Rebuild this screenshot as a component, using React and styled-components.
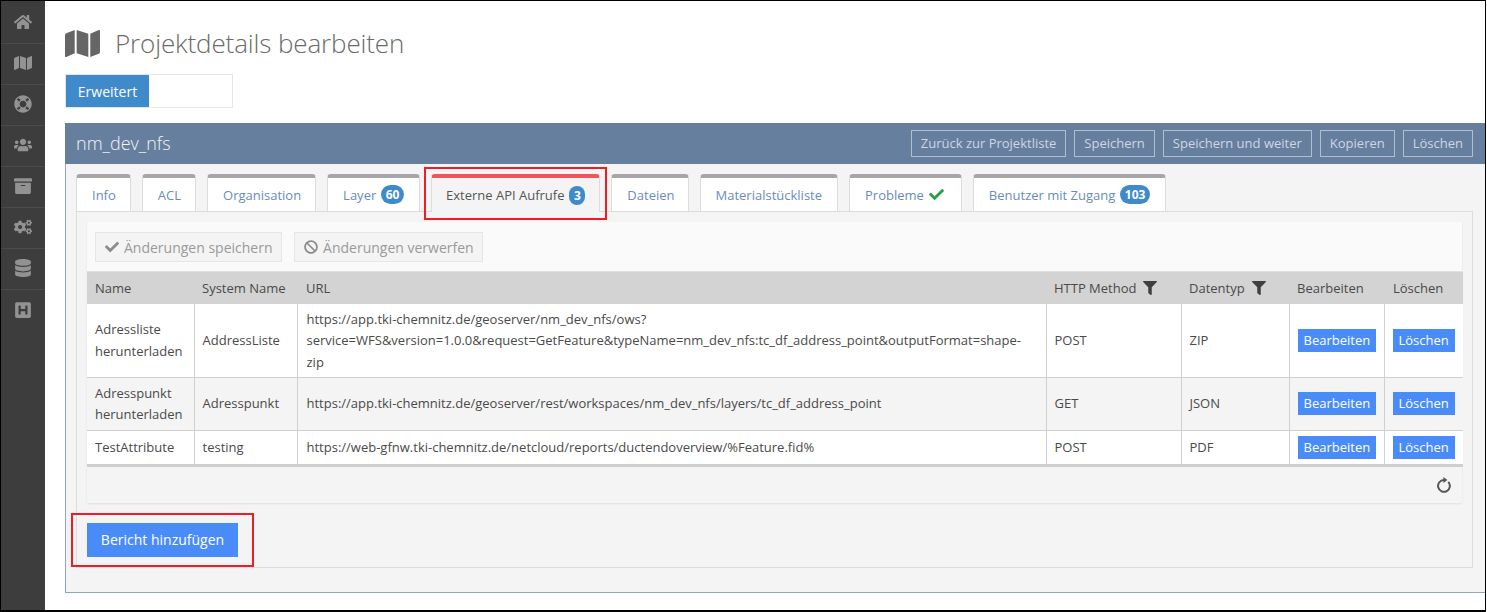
import React from "react";
import styled, { createGlobalStyle } from "styled-components";
import { FaHome, FaMap, FaLifeRing, FaUsers, FaArchive, FaCogs, FaDatabase, FaHSquare, FaCheck, FaBan, FaFilter } from "react-icons/fa";

const Global = createGlobalStyle`
  html, body { margin: 0; padding: 0; background: #fff; }
  body { font-family: "Open Sans", "Liberation Sans", sans-serif; font-size: 13px; color: #444; }
  * { box-sizing: border-box; }
`;
const Frame = styled.div`
  position: relative; width: 1486px; height: 612px; display: flex; overflow: hidden;
  border: 1px solid #000; border-width: 1px 1px 2px 1px; background: #fff;
`;
const Sidebar = styled.nav`
  width: 44px; flex: none; background: #3d3d3d; display: flex; flex-direction: column; padding-top: 2px;
`;
const SideItem = styled.div`
  height: 41px; display: flex; align-items: center; justify-content: center; color: #929292; font-size: 18px;
  border-bottom: 1px solid #4a4a4a; padding-bottom: 2px;
  &:last-child { border-bottom: 0; }
`;
const Main = styled.main`
  flex: 1; min-width: 0; padding: 0 0 0 20px; display: flex; flex-direction: column;
`;
const Title = styled.h1`
  margin: 0; height: 73px; padding-top: 17px; padding-bottom: 6px; display: flex; align-items: center; gap: 15px;
  font-weight: 300; font-size: 26px; letter-spacing: -0.13px; color: #6b6b6b; line-height: 42px;
  svg { color: #666; font-size: 35px; }
`;
const ModeBar = styled.div`
  width: 168px; height: 34px; border: 1px solid #e6e6e6; padding: 0; display: flex;
`;
const ModeTab = styled.div`
  width: 83px; background: #3f8acb; color: #fff; font-weight: 500; font-size: 14px;
  display: flex; align-items: center; justify-content: center;
`;
const Panel = styled.section`
  margin-top: 15px; height: 470px; background: #f4f4f4; border: 1px solid #95a3b8; border-top: 0; border-right: 0;
  display: flex; flex-direction: column;
`;
const PanelHead = styled.header`
  height: 41px; background: #667f9f; display: flex; align-items: center; justify-content: space-between;
  padding: 0 12px 1px 11px; color: #fff; margin-left: -1px;
`;
const PanelName = styled.div` font-size: 18px; font-weight: 300; color: #f2f2f2; `;
const HeadButtons = styled.div` display: flex; gap: 8px; `;
const HeadButton = styled.button`
  height: 27px; padding: 0 9px; background: transparent; border: 1px solid #b3bfcf; color: #ced6e1;
  font: 13px "Open Sans", sans-serif;
`;
const Body = styled.div` padding: 10px 12px 0 10px; position: relative; `;
const Tabs = styled.div` display: flex; gap: 11px; height: 38px; position: relative; z-index: 1; `;
const Tab = styled.div`
  height: ${p => (p.$active ? "38px" : "37px")};
  border: 1px solid #dcdcdc; border-top: 4px solid ${p => (p.$active ? "#f2545b" : "#a6a6a6")};
  border-bottom: 0; border-radius: 4px 4px 0 0;
  background: ${p => (p.$active ? "#f4f4f4" : "#fff")};
  color: ${p => (p.$active ? "#555" : "#6a8cba")};
  padding: 0 ${p => p.$pr || 14}px 0 ${p => p.$pl || 15}px;
  display: flex; align-items: center; gap: 5px; font-size: 13px; white-space: nowrap;
  svg { color: #2e9e44; font-size: 15px; }
`;
const Badge = styled.span`
  background: #3f8acb; color: #fff; font-weight: 700; font-size: 12px; border-radius: 10px; height: 19px; min-width: 15px;
  padding: 0 4.5px; display: inline-flex; align-items: center; justify-content: center;
`;
const TabPane = styled.div`
  height: 357px; margin-top: -1px; border: 1px solid #dcdcdc; padding: 10px 10px 0 10px; display: flex; flex-direction: column;
`;
const Grid = styled.div`
  background: #f4f4f4; box-shadow: 0 1px 2px rgba(0,0,0,.08);
`;
const Toolbar = styled.div`
  height: 50px; background: #fafafa; padding: 10px 8px; display: flex; gap: 12px; border-bottom: 1px solid #e0e0e0;
`;
const ToolButton = styled.button`
  height: 30px; padding: 0 8.5px 0 9px; background: #f4f4f4; border: 1px solid #e6e6e6; color: #9a9a9a;
  display: inline-flex; align-items: center; gap: 5px; font: 14px "Open Sans", sans-serif;
  svg { color: #8c8c8c; font-size: 14px; }
`;
const Table = styled.table`
  width: 1376px; table-layout: fixed; border-collapse: collapse; font-size: 13px; color: #4a4a4a;
  border-bottom: 3px solid #cfcfcf;
  tbody tr + tr td { border-top: 1px solid #d0d0d0; }
`;
const Th = styled.th`
  height: 32px; background: #d3d3d3; font-weight: 400; text-align: left; padding: 0 8px 0 ${p => p.$pl || 8}px; color: #4a4a4a; white-space: nowrap;
  svg { font-size: 14px; color: #3f3f3f; margin-left: 7px; vertical-align: -2px; }
`;
const Row = styled.tr`
  background: ${p => (p.$alt ? "#f4f4f4" : "#fff")};
  height: ${p => p.$h}px;
`;
const Td = styled.td`
  padding: 1px 8px 0; line-height: 21.5px; border-left: 1px solid #d0d0d0; word-break: break-word;
  &:first-child { border-left: 0; }
`;
const UrlCell = styled(Td)` padding-left: 9px; padding-right: 19px; `;
const ActionCell = styled(Td)` padding-top: 0; white-space: nowrap; line-height: 0; `;
const Action = styled.button`
  height: 23px; padding: 0 6px; background: #4a8cf7; border: 0; color: #fff; font: 13px/23px "Open Sans", sans-serif; vertical-align: middle;
`;
const GridFoot = styled.div`
  height: 36px; display: flex; align-items: center; justify-content: flex-end; padding-right: 10px; color: #555;
`;
const AddButton = styled.button`
  margin: 20px 0 0 0; width: 151px; height: 34px; background: #4a8cf7; border: 0; color: #fff; font: 14px "Open Sans", sans-serif;
  align-self: flex-start;
`;
const Mark = styled.div`
  position: absolute; border: 2px solid #ee1c25; pointer-events: none; z-index: 5;
  left: ${p => p.$x}px; top: ${p => p.$y}px; width: ${p => p.$w}px; height: ${p => p.$h}px;
`;

const ReloadIcon = () => (
  <svg width="16" height="16" viewBox="0 0 16 16" aria-hidden="true">
    <path d="M12.3 4.9 A5.9 5.9 0 1 1 8 3" fill="none" stroke="currentColor" strokeWidth="2" />
    <path d="M7.4 0 L11.4 3 L7.4 6 Z" fill="currentColor" />
  </svg>
);

const sideIcons = [FaHome, FaMap, FaLifeRing, FaUsers, FaArchive, FaCogs, FaDatabase, FaHSquare];
const headButtons = ["Zurück zur Projektliste", "Speichern", "Speichern und weiter", "Kopieren", "Löschen"];
const rows = [
  { h: 73, name: "Adressliste herunterladen", sys: "AddressListe", url: "https://app.tki-chemnitz.de/geoserver/nm_dev_nfs/ows?service=WFS&version=1.0.0&request=GetFeature&typeName=nm_dev_nfs:tc_df_address_point&outputFormat=shape-zip", m: "POST", t: "ZIP" },
  { h: 53, alt: true, name: "Adresspunkt herunterladen", sys: "Adresspunkt", url: "https://app.tki-chemnitz.de/geoserver/rest/workspaces/nm_dev_nfs/layers/tc_df_address_point", m: "GET", t: "JSON" },
  { h: 35, name: "TestAttribute", sys: "testing", url: "https://web-gfnw.tki-chemnitz.de/netcloud/reports/ductendoverview/%Feature.fid%", m: "POST", t: "PDF" },
];

export default function App() {
  return (
    <>
      <Global />
      <Frame>
        <Sidebar>
          {sideIcons.map((I, i) => <SideItem key={i}><I /></SideItem>)}
        </Sidebar>
        <Main>
          <Title><FaMap />Projektdetails bearbeiten</Title>
          <ModeBar><ModeTab>Erweitert</ModeTab></ModeBar>
          <Panel>
            <PanelHead>
              <PanelName>nm_dev_nfs</PanelName>
              <HeadButtons>{headButtons.map(b => <HeadButton key={b}>{b}</HeadButton>)}</HeadButtons>
            </PanelHead>
            <Body>
              <Tabs>
                <Tab>Info</Tab>
                <Tab>ACL</Tab>
                <Tab>Organisation</Tab>
                <Tab $pr={15}>Layer <Badge>60</Badge></Tab>
                <Tab $active $pl={14}>Externe API Aufrufe <Badge>3</Badge></Tab>
                <Tab $pr={13}>Dateien</Tab>
                <Tab $pr={15}>Materialstückliste</Tab>
                <Tab $pr={17}>Probleme <FaCheck /></Tab>
                <Tab $pr={15}>Benutzer mit Zugang <Badge>103</Badge></Tab>
              </Tabs>
              <TabPane>
                <Grid>
                  <Toolbar>
                    <ToolButton><FaCheck />Änderungen speichern</ToolButton>
                    <ToolButton><FaBan />Änderungen verwerfen</ToolButton>
                  </Toolbar>
                  <Table>
                    <colgroup>
                      <col style={{ width: 107 }} /><col style={{ width: 103 }} /><col style={{ width: 749 }} />
                      <col style={{ width: 135 }} /><col style={{ width: 108 }} /><col style={{ width: 95 }} /><col style={{ width: 79 }} />
                    </colgroup>
                    <thead>
                      <tr>
                        <Th>Name</Th><Th>System Name</Th><Th $pl={9}>URL</Th>
                        <Th>HTTP Method<FaFilter /></Th><Th>Datentyp<FaFilter /></Th><Th>Bearbeiten</Th><Th $pl={9}>Löschen</Th>
                      </tr>
                    </thead>
                    <tbody>
                      {rows.map(r => (
                        <Row key={r.sys} $h={r.h} $alt={r.alt}>
                          <Td>{r.name}</Td><Td>{r.sys}</Td><UrlCell>{r.url}</UrlCell><Td>{r.m}</Td><Td>{r.t}</Td>
                          <ActionCell><Action>Bearbeiten</Action></ActionCell>
                          <ActionCell><Action>Löschen</Action></ActionCell>
                        </Row>
                      ))}
                    </tbody>
                  </Table>
                  <GridFoot><ReloadIcon /></GridFoot>
                </Grid>
                <AddButton>Bericht hinzufügen</AddButton>
              </TabPane>
            </Body>
          </Panel>
        </Main>
        <Mark $x={423} $y={166} $w={183} $h={53} />
        <Mark $x={70} $y={512} $w={183} $h={54} />
      </Frame>
    </>
  );
}
